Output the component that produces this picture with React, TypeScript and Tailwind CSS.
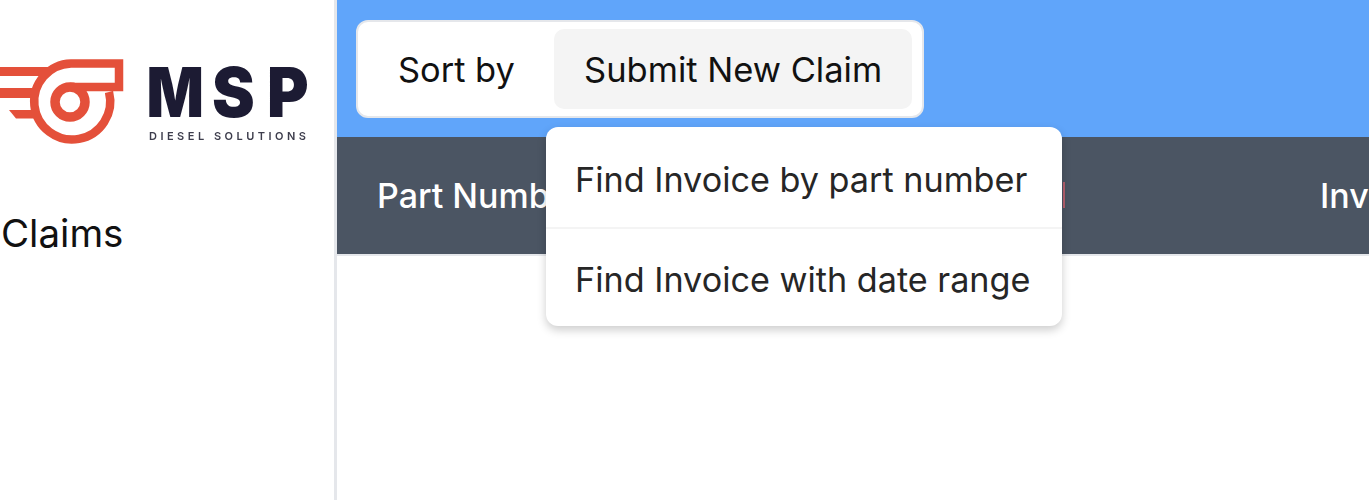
export default function App() {
  return (
    <div className="flex h-[500px] w-full overflow-hidden bg-white font-['Inter',sans-serif] text-[#111111]">
      <aside className="flex w-[337px] shrink-0 flex-col border-r-[3px] border-[#e5e7eb]">
        <svg className="mt-[50px] h-[100px] w-[334px] shrink-0 blur-[0.4px]" viewBox="0 50 334 100" fill="none">
          <g stroke="#e4503a">
            <path d="M109 92 A38 38 0 1 1 71 63.500 H119 V87 H70" strokeWidth="8.500" />
            <circle cx="70" cy="102" r="15" strokeWidth="9.500" />
            <path d="M-2 71.500 H50" strokeWidth="9" />
            <path d="M-2 93 H36" strokeWidth="10" />
          </g>
          <path d="M9 110 H36 V118.500 H16 Z" fill="#e4503a" />
          <g fill="#1c1b33" fontFamily="Inter, sans-serif" fontWeight="900" fontSize="69">
            <text transform="translate(146.500 117) scale(0.87 1)">M</text>
            <text transform="translate(212 117) scale(0.93 1)">S</text>
            <text transform="translate(267 117) scale(0.92 1)">P</text>
          </g>
          <text x="149" y="140" fill="#3d3d4c" fontFamily="Inter, sans-serif" fontWeight="600" fontSize="11" textLength="157">DIESEL SOLUTIONS</text>
        </svg>
        <div className="mt-[59px] pl-[1px] text-[38.5px] leading-[48px]">Claims</div>
      </aside>
      <main className="relative min-w-0 flex-1">
        <header className="flex h-[137px] items-start bg-[#60a5fa] pt-[20px] pl-[19px]">
          <div className="flex h-[98px] w-[568px] items-center rounded-[12px] border-[2px] border-[#e5e7eb] bg-white pl-[7px]">
            <div className="flex h-[80px] w-[189px] shrink-0 items-center pt-[2px] pl-[33px] text-[34.4px]">Sort by</div>
            <div className="flex h-[80px] w-[358px] items-center rounded-[10px] bg-[#f4f4f4] pt-[2px] pl-[30px] text-[34.5px]">Submit New Claim</div>
          </div>
        </header>
        <div className="flex h-[119px] items-center justify-between border-b-[2px] border-[#e5e7eb] bg-[#4b5563] pl-[40px] text-[34px] font-medium whitespace-nowrap text-white">
          <span>Part Number</span>
          <span className="w-[49px] overflow-hidden">Invoice</span>
        </div>
        <div className="absolute top-[182px] left-[726px] h-[26px] w-[2px] bg-[#b5606e]"></div>
        <div className="absolute top-[127px] left-[209px] w-[516px] rounded-[12px] bg-white text-[34.2px] text-[#262626] shadow-[0_4px_10px_rgba(0,0,0,0.2)]">
          <div className="flex h-[102px] items-center border-b-[2px] border-[#f4f4f4] pt-[5px] pl-[29px]">Find Invoice by part number</div>
          <div className="flex h-[97px] items-center pt-[4px] pl-[29px]">Find Invoice with date range</div>
        </div>
      </main>
    </div>
  );
}
